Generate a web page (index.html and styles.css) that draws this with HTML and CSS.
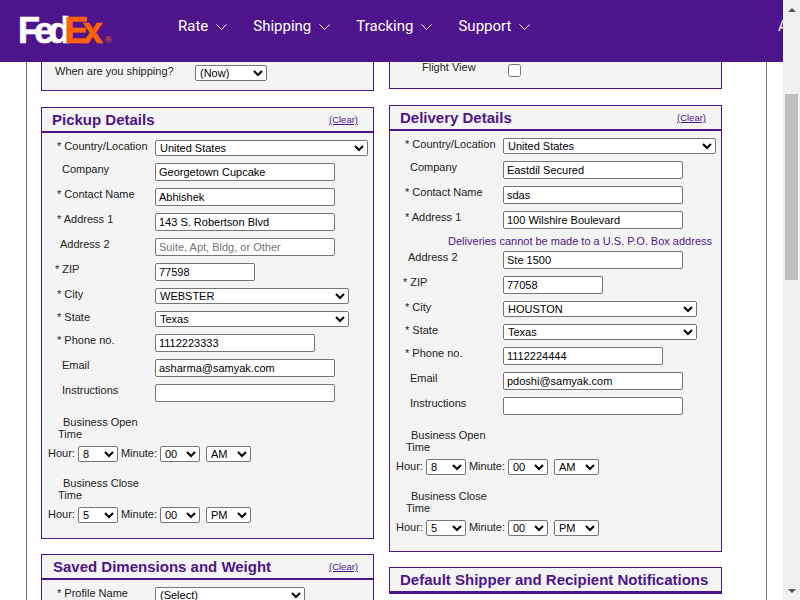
FILE: index.html
```html
<!DOCTYPE html>
<html lang="en">
<head>
<meta charset="utf-8">
<title>FedEx</title>
<link rel="stylesheet" href="styles.css">
</head>
<body>
<div class="window">
  <div class="viewport">
    <header class="topbar">
      <a class="logo"><span class="fed">Fed</span><span class="ex">Ex</span><span class="reg">®</span></a>
      <nav class="nav">
        <a class="nav-item">Rate <svg class="chev" viewBox="0 0 11 6"><path d="M0.5 0.5 L5.5 5.5 L10.5 0.5"/></svg></a>
        <a class="nav-item">Shipping <svg class="chev" viewBox="0 0 11 6"><path d="M0.5 0.5 L5.5 5.5 L10.5 0.5"/></svg></a>
        <a class="nav-item">Tracking <svg class="chev" viewBox="0 0 11 6"><path d="M0.5 0.5 L5.5 5.5 L10.5 0.5"/></svg></a>
        <a class="nav-item">Support <svg class="chev" viewBox="0 0 11 6"><path d="M0.5 0.5 L5.5 5.5 L10.5 0.5"/></svg></a>
      </nav>
      <span class="account">A</span>
    </header>
    <main class="frame">
      <section class="col">
        <div class="panel top-left">
          <label class="when">When are you shipping?</label>
          <select class="sel-now"><option>(Now)</option></select>
        </div>
        <div class="panel pickup">
          <div class="panel-head"><h2>Pickup Details</h2><a class="clear">(Clear)</a></div>
          <div class="fields">
            <div class="row"><label class="lb star">* Country/Location</label><select class="sel-wide"><option>United States</option></select></div>
            <div class="row"><label class="lb plain">Company</label><input class="in-l" value="Georgetown Cupcake"></div>
            <div class="row"><label class="lb star">* Contact Name</label><input class="in-l" value="Abhishek"></div>
            <div class="row"><label class="lb star">* Address 1</label><input class="in-l" value="143 S. Robertson Blvd"></div>
            <div class="row"><label class="lb mid">Address 2</label><input class="in-l" placeholder="Suite, Apt, Bldg, or Other"></div>
            <div class="row"><label class="lb zip">* ZIP</label><input class="in-s" value="77598"></div>
            <div class="row"><label class="lb star">* City</label><select class="sel-mid"><option>WEBSTER</option></select></div>
            <div class="row"><label class="lb star">* State</label><select class="sel-mid"><option>Texas</option></select></div>
            <div class="row"><label class="lb star">* Phone no.</label><input class="in-m" value="1112223333"></div>
            <div class="row"><label class="lb plain">Email</label><input class="in-l" value="asharma@samyak.com"></div>
            <div class="row"><label class="lb plain">Instructions</label><input class="in-l"></div>
          </div>
          <div class="hours">
            <div class="hours-title">Business Open Time</div>
            <div class="hours-row"><span>Hour:</span><select class="sel-hm"><option>8</option></select><span>Minute:</span><select class="sel-hm"><option>00</option></select><select class="sel-ap"><option>AM</option></select></div>
            <div class="hours-title close">Business Close Time</div>
            <div class="hours-row"><span>Hour:</span><select class="sel-hm"><option>5</option></select><span>Minute:</span><select class="sel-hm"><option>00</option></select><select class="sel-ap"><option>PM</option></select></div>
          </div>
        </div>
        <div class="panel saved">
          <div class="panel-head"><h2>Saved Dimensions and Weight</h2><a class="clear">(Clear)</a></div>
          <div class="fields">
            <div class="row"><label class="lb star">* Profile Name</label><select class="sel-profile"><option>(Select)</option></select></div>
          </div>
        </div>
      </section>
      <section class="col">
        <div class="panel top-right">
          <label class="flight">Flight View</label>
          <input type="checkbox" class="check">
        </div>
        <div class="panel delivery">
          <div class="panel-head"><h2>Delivery Details</h2><a class="clear">(Clear)</a></div>
          <div class="fields">
            <div class="row"><label class="lb star">* Country/Location</label><select class="sel-wide"><option>United States</option></select></div>
            <div class="row"><label class="lb plain">Company</label><input class="in-l" value="Eastdil Secured"></div>
            <div class="row"><label class="lb star">* Contact Name</label><input class="in-l" value="sdas"></div>
            <div class="row-group">
              <div class="row"><label class="lb star">* Address 1</label><input class="in-l" value="100 Wilshire Boulevard"></div>
              <p class="note">Deliveries cannot be made to a U.S. P.O. Box address</p>
              <div class="row"><label class="lb mid">Address 2</label><input class="in-l" value="Ste 1500"></div>
            </div>
            <div class="row"><label class="lb zip">* ZIP</label><input class="in-s" value="77058"></div>
            <div class="row"><label class="lb star">* City</label><select class="sel-mid"><option>HOUSTON</option></select></div>
            <div class="row"><label class="lb star">* State</label><select class="sel-mid"><option>Texas</option></select></div>
            <div class="row"><label class="lb star">* Phone no.</label><input class="in-m" value="1112224444"></div>
            <div class="row"><label class="lb plain">Email</label><input class="in-l" value="pdoshi@samyak.com"></div>
            <div class="row"><label class="lb plain">Instructions</label><input class="in-l"></div>
          </div>
          <div class="hours">
            <div class="hours-title">Business Open Time</div>
            <div class="hours-row"><span>Hour:</span><select class="sel-hm"><option>8</option></select><span>Minute:</span><select class="sel-hm"><option>00</option></select><select class="sel-ap"><option>AM</option></select></div>
            <div class="hours-title close">Business Close Time</div>
            <div class="hours-row"><span>Hour:</span><select class="sel-hm"><option>5</option></select><span>Minute:</span><select class="sel-hm"><option>00</option></select><select class="sel-ap"><option>PM</option></select></div>
          </div>
        </div>
        <div class="panel notify">
          <div class="panel-head"><h2>Default Shipper and Recipient Notifications</h2></div>
        </div>
      </section>
    </main>
  </div>
  <aside class="scrollbar">
    <span class="arrow up"></span>
    <span class="thumb"></span>
    <span class="arrow down"></span>
  </aside>
</div>
</body>
</html>
```
FILE: styles.css
```css
* { box-sizing: border-box; }
html, body { margin: 0; height: 100%; overflow: hidden; background: #fff; }
body { font-family: "Liberation Sans", Arial, sans-serif; font-size: 11px; color: #222; }

.window { display: flex; width: 800px; height: 600px; overflow: hidden; }
.viewport { width: 783px; height: 600px; overflow: hidden; display: flex; flex-direction: column; }

.topbar { flex: none; height: 62px; background: #4d148c; display: flex; color: #fff; font-family: Roboto, sans-serif; font-size: 15px; overflow: hidden; white-space: nowrap; }
.logo { width: 178px; flex: none; padding: 12px 0 0 18px; font-family: "Liberation Sans", sans-serif; font-weight: 700; font-size: 36px; letter-spacing: -5.8px; line-height: 38px; -webkit-text-stroke: 0.7px currentColor; }
.fed { color: #fff; }
.ex { color: #ff6200; }
.reg { color: #ff6200; font-size: 9px; letter-spacing: 0; -webkit-text-stroke: 0; font-weight: 400; margin-left: 8px; }
.nav { display: flex; gap: 26px; padding-top: 17px; width: 600px; flex: none; }
.nav-item { display: flex; gap: 8px; height: 19px; line-height: 19px; align-items: center; }
.chev { width: 11px; height: 6px; fill: none; stroke: #fff; stroke-width: 1; }
.account { padding-top: 17px; line-height: 19px; }

.frame { flex: none; width: 741px; height: 538px; margin-left: 26px; border-left: 1px solid #767676; border-right: 1px solid #767676; padding: 0 14px; display: flex; gap: 15px; overflow: hidden; }
.col { width: 333px; flex: none; display: flex; flex-direction: column; }
.panel { background: #f4f4f4; border: 1px solid #4d148c; flex: none; }
.pickup, .delivery { margin-bottom: 15px; }
.top-left { border-top: 0; height: 29px; margin-bottom: 16px; display: flex; padding-left: 13px; }
.top-right { border-top: 0; height: 27px; margin-bottom: 16px; display: flex; padding-left: 32px; }
.when { width: 140px; padding-top: 3px; line-height: 13px; }
.sel-now { width: 72px; margin-top: 3px; }
.flight { width: 86px; line-height: 11px; }
.check { margin: 2px 0 0 0; width: 13px; height: 13px; }

.panel-head { height: 25px; border-bottom: 2px solid #4d148c; display: flex; justify-content: space-between; padding: 3px 15px 0 10px; }
.saved .panel-head { padding-left: 11px; }
.panel-head h2 { margin: 0; font-size: 15px; line-height: 18px; font-weight: 700; color: #4d148c; white-space: nowrap; }
.clear { font-size: 9.5px; line-height: 14px; margin-top: 2px; color: #4d148c; text-decoration: underline; }

.fields { display: flex; flex-direction: column; gap: 7px; padding-top: 7px; }
.row-group { display: flex; flex-direction: column; }
.row { display: flex; }
.lb { width: 113px; flex: none; line-height: 13px; color: #222; white-space: nowrap; }
.star { padding-left: 15px; }
.plain { padding-left: 20px; }
.mid { padding-left: 18px; }
.zip { padding-left: 13px; }
.note { margin: 6px 0 3px; text-align: right; padding-right: 9px; font-size: 11px; line-height: 13px; color: #4d148c; }

input, select { font-family: "Liberation Sans", Arial, sans-serif; font-size: 11px; color: #000; margin: 0; }
input:not(.check) { height: 18px; padding: 1px 3px; border: 1px solid #767676; border-radius: 2px; background: #fff; }
select { height: 16px; padding: 0; background: #fff; border: 1px solid #767676; border-radius: 2px; }
input::placeholder { color: #757575; }
.in-l { width: 180px; }
.in-m { width: 160px; }
.in-s { width: 100px; }
.sel-wide { width: 213px; }
.sel-mid { width: 194px; }
.sel-profile { width: 150px; }
.sel-hm { width: 40px; }
.sel-ap { width: 45px; margin-left: 3px; }

.hours { padding: 14px 0 15px 6px; }
.hours-title { width: 100px; padding-left: 10px; text-indent: 5px; line-height: 12px; }
.hours-title.close { margin-top: 15px; }
.hours-row { display: flex; gap: 3px; margin-top: 6px; align-items: flex-start; line-height: 13px; }
.hours-row span { padding-top: 1px; }

.scrollbar { width: 17px; flex: none; background: #f0f0f0; display: flex; flex-direction: column; align-items: center; }
.thumb { width: 13px; height: 186px; background: #bfbfbf; margin-top: 82px; }
.arrow { width: 0; height: 0; border-left: 4px solid transparent; border-right: 4px solid transparent; }
.arrow.up { border-bottom: 4px solid #505050; margin-top: 8px; }
.arrow.down { border-top: 4px solid #505050; margin-top: 309px; }
```
